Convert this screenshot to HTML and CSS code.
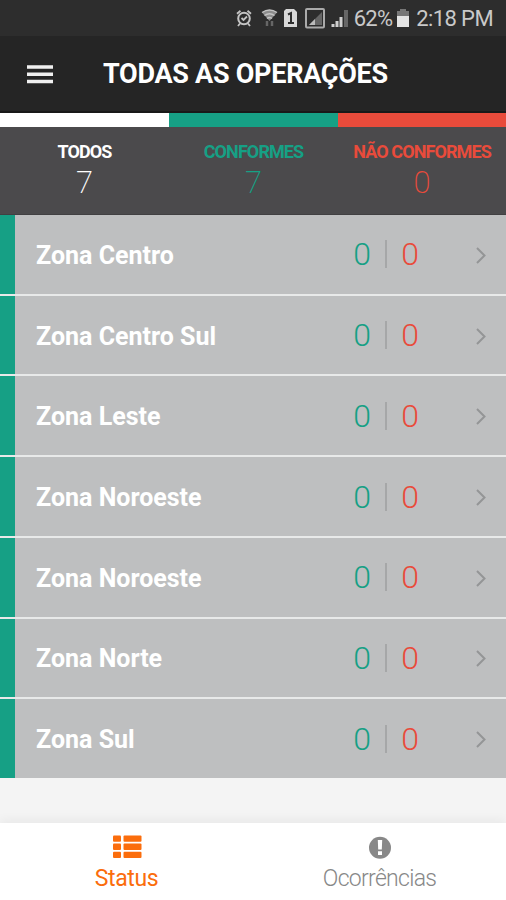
FILE: index.html
```html
<!DOCTYPE html>
<html lang="pt-BR">
  <head>
    <meta charset="UTF-8" />
    <meta name="viewport" content="width=device-width, initial-scale=1.0" />
    <title>Todas as Operações</title>
    <link rel="stylesheet" href="styles.css">
  </head>
  <body>
    <div class="status-bar">
      <svg class="status-icons" width="124" height="36" viewBox="0 0 124 36" fill="none" stroke="#c4c4c4">
        <!-- alarm -->
        <circle cx="9" cy="18.500" r="5.800" stroke-width="2" />
        <path d="M6.500 18l2 2 3.500-3.500M2 13.700l3.500-3M16 13.700l-3.500-3M5 23.500l-2 2.500M13 23.500l2 2.500" stroke-width="1.800" />
        <!-- wifi -->
        <path d="M27 12.500q7.500-5 15 0L34.500 21z" fill="#8c8c8c" stroke="none" />
        <path d="M27 12.500q7.500-5 15 0M29.500 15.500q5-3.500 10 0M32 18.500q2.500-2 5 0" stroke-width="1.500" />
        <path d="M32 21v5M37 21v5" stroke="#666" stroke-width="2.500" />
        <!-- sim -->
        <path d="M51 9h8l3 3v15H49V11z" fill="#d8d8d8" stroke="none" />
        <path d="M53 14.500l3-1.500v10M53 23h6" stroke="#2d2d2d" stroke-width="2" />
        <!-- signal -->
        <rect x="71" y="9" width="18" height="18.500" rx="1" stroke="#aaa" stroke-width="2" />
        <path d="M74 25L87 12v13z" fill="#666" stroke="none" />
        <path d="M74 25l6-6v6z" fill="#bbb" stroke="none" />
        <path d="M98 27v-3M102 27v-6M106 27v-10" stroke="#d0d0d0" stroke-width="3" />
        <path d="M111 27V10" stroke="#666" stroke-width="4" />
      </svg>
      <span class="battery-text">62%</span>
      <svg class="battery-icon" width="12" height="18" viewBox="0 0 12 18">
        <path d="M3 0h6v2h3v6H0V2h3z" fill="#777" />
        <path d="M0 7h12v11H0z" fill="#e4e4e4" />
      </svg>
      <span class="time">2:18 PM</span>
    </div>

    <div class="header">
      <svg class="menu-icon" width="26" height="20" viewBox="0 0 26 20" stroke="#f0f0f0" stroke-width="3.500">
        <path d="M0 3h26M0 10.200h26M0 17.400h26" />
      </svg>
      <h1>TODAS AS OPERAÇÕES</h1>
    </div>

    <div class="tabs">
      <div class="tab tab-all">
        <span class="tab-label">TODOS</span>
        <span class="tab-count">7</span>
      </div>
      <div class="tab tab-ok">
        <span class="tab-label">CONFORMES</span>
        <span class="tab-count">7</span>
      </div>
      <div class="tab tab-bad">
        <span class="tab-label">NÃO CONFORMES</span>
        <span class="tab-count">0</span>
      </div>
    </div>

    <div class="zone-list">
      <div class="zone">
        <span class="zone-name">Zona Centro</span>
        <span class="count-ok">0</span><span class="divider"></span><span class="count-bad">0</span>
        <svg class="arrow" width="10" height="17" viewBox="0 0 10 17"><path d="M1 2l7.500 7.500L1 17" /></svg>
      </div>
      <div class="zone">
        <span class="zone-name">Zona Centro Sul</span>
        <span class="count-ok">0</span><span class="divider"></span><span class="count-bad">0</span>
        <svg class="arrow" width="10" height="17" viewBox="0 0 10 17"><path d="M1 2l7.500 7.500L1 17" /></svg>
      </div>
      <div class="zone">
        <span class="zone-name">Zona Leste</span>
        <span class="count-ok">0</span><span class="divider"></span><span class="count-bad">0</span>
        <svg class="arrow" width="10" height="17" viewBox="0 0 10 17"><path d="M1 2l7.500 7.500L1 17" /></svg>
      </div>
      <div class="zone">
        <span class="zone-name">Zona Noroeste</span>
        <span class="count-ok">0</span><span class="divider"></span><span class="count-bad">0</span>
        <svg class="arrow" width="10" height="17" viewBox="0 0 10 17"><path d="M1 2l7.500 7.500L1 17" /></svg>
      </div>
      <div class="zone">
        <span class="zone-name">Zona Noroeste</span>
        <span class="count-ok">0</span><span class="divider"></span><span class="count-bad">0</span>
        <svg class="arrow" width="10" height="17" viewBox="0 0 10 17"><path d="M1 2l7.500 7.500L1 17" /></svg>
      </div>
      <div class="zone">
        <span class="zone-name">Zona Norte</span>
        <span class="count-ok">0</span><span class="divider"></span><span class="count-bad">0</span>
        <svg class="arrow" width="10" height="17" viewBox="0 0 10 17"><path d="M1 2l7.500 7.500L1 17" /></svg>
      </div>
      <div class="zone">
        <span class="zone-name">Zona Sul</span>
        <span class="count-ok">0</span><span class="divider"></span><span class="count-bad">0</span>
        <svg class="arrow" width="10" height="17" viewBox="0 0 10 17"><path d="M1 2l7.500 7.500L1 17" /></svg>
      </div>
    </div>

    <div class="bottom-nav">
      <div class="nav-item nav-status">
        <svg width="30" height="24" viewBox="0 0 30 24" fill="#fb6d0c">
          <rect x="1" y="0.500" width="8" height="6.300" rx="1" />
          <rect x="11.500" y="0.500" width="18" height="6.300" rx="1" />
          <rect x="1" y="8.600" width="8" height="6.300" rx="1" />
          <rect x="11.500" y="8.600" width="18" height="6.300" rx="1" />
          <rect x="1" y="16.700" width="8" height="6.300" rx="1" />
          <rect x="11.500" y="16.700" width="18" height="6.300" rx="1" />
        </svg>
        <span>Status</span>
      </div>
      <div class="nav-item nav-events">
        <svg width="24" height="24" viewBox="0 0 24 24">
          <circle cx="12" cy="12.700" r="11" fill="#888" />
          <path d="M9.800 5h4.400l-.4 9.500h-3.600zM10 16.200h4v3.800h-4z" fill="#fff" />
        </svg>
        <span>Ocorrências</span>
      </div>
    </div>
  </body>
</html>
```
FILE: styles.css
```css
* {
  box-sizing: border-box;
}
body {
  font-family: Roboto, "Liberation Sans", sans-serif;
  background-color: #f4f4f4;
  margin: 0;
  height: 900px;
  display: flex;
  flex-direction: column;
  overflow: hidden;
}
.status-bar {
  height: 36px;
  background-color: #2d2d2d;
  color: #c9c9c9;
  display: flex;
  align-items: center;
  justify-content: flex-end;
  padding-right: 13px;
  font-size: 22px;
  white-space: nowrap;
}
.status-icons {
  margin-right: -5px;
}
.battery-text {
  letter-spacing: -0.8px;
}
.battery-icon {
  margin: 0 7px 0 5px;
}
.time {
  letter-spacing: -0.6px;
}
.header {
  height: 77px;
  background-color: #252525;
  border-bottom: 2px solid #191919;
  display: flex;
  align-items: center;
  padding-left: 27px;
}
.header h1 {
  margin: 0 0 0 50px;
  color: white;
  font-size: 27px;
  font-weight: 700;
  letter-spacing: -0.27px;
  white-space: nowrap;
}
.tabs {
  display: grid;
  grid-template-columns: 169px 169px 168px;
  height: 102px;
  background-color: #4b4a4c;
  border-bottom: 1px solid #414042;
}
.tab {
  border-top: 14px solid;
  display: flex;
  flex-direction: column;
  align-items: center;
  padding-top: 15px;
  white-space: nowrap;
}
.tab-all {
  color: white;
}
.tab-ok {
  color: #16a085;
}
.tab-bad {
  color: #e94b3b;
}
.tab-label {
  font-size: 18px;
  line-height: 20px;
  font-weight: 700;
  letter-spacing: -0.9px;
}
.tab-count {
  font-size: 31px;
  line-height: 42px;
  font-weight: 200;
}
.zone-list {
  height: 563px;
  display: flex;
  flex-direction: column;
  gap: 2px;
  background-color: #e8e9e9;
}
.zone {
  flex: 1;
  display: flex;
  align-items: center;
  background-color: #bebfc0;
  border-left: 15px solid #16a085;
  padding: 0 20px 0 21px;
}
.zone-name {
  flex: 1;
  padding-top: 2px;
  color: white;
  font-size: 25px;
  font-weight: 700;
}
.count-ok,
.count-bad {
  width: 18px;
  font-size: 32px;
  line-height: 36px;
  font-weight: 300;
  text-align: center;
}
.count-ok {
  color: #16a085;
}
.count-bad {
  color: #e94b3b;
}
.divider {
  width: 2px;
  height: 28px;
  margin: 0 14px;
  background-color: #a6a7a8;
}
.arrow {
  margin-left: 57px;
  fill: none;
  stroke: #949596;
  stroke-width: 2;
  overflow: visible;
}
.bottom-nav {
  margin-top: auto;
  height: 77px;
  background-color: white;
  box-shadow: 0 -3px 10px rgba(0, 0, 0, 0.05);
  display: flex;
}
.nav-item {
  flex: 1;
  display: flex;
  flex-direction: column;
  align-items: center;
  padding-top: 12px;
  font-size: 23px;
  line-height: 40px;
}
.nav-status {
  color: #fb6d0c;
  letter-spacing: -0.4px;
}
.nav-events {
  color: #888;
  font-weight: 300;
  letter-spacing: -0.7px;
}
```
